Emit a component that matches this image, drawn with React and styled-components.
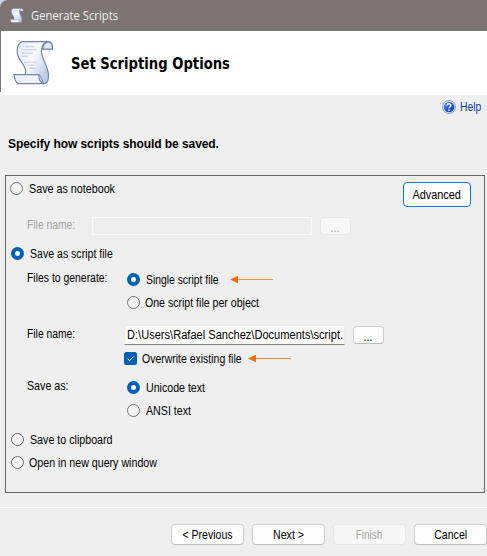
import React from 'react';
import styled, { createGlobalStyle, css } from 'styled-components';

const GlobalStyle = createGlobalStyle`
  * { box-sizing: border-box; }
  body { margin: 0; background: #efefef; }
`;

const Dialog = styled.main`
  display: flex;
  flex-direction: column;
  width: 487px;
  height: 556px;
  overflow: hidden;
  background: #efefef;
  color: #000;
  font: 12px/15px "Liberation Sans", Arial, sans-serif;
  white-space: nowrap;
`;

const TitleCorner = styled.div`
  flex: none;
  background: #c9d3e2;
`;

const TitleBar = styled.header`
  display: flex;
  align-items: center;
  gap: 7px;
  height: 31px;
  padding-left: 10px;
  border-top-left-radius: 8px;
  background: #7b7473;
  color: #f1efef;
  font: 12px/16px "Open Sans", "Noto Sans", sans-serif;
`;

const Banner = styled.section`
  display: flex;
  flex: none;
  align-items: center;
  gap: 16px;
  height: 64px;
  padding-left: 13px;
  background:
    linear-gradient(#7b7473, #7b7473) 0 0 / 1px 61px no-repeat,
    #fff;
`;

const Title = styled.h1`
  margin: 2px 0 0;
  font: bold 15px/20px "DejaVu Sans Condensed", "DejaVu Sans", sans-serif;
  font-stretch: condensed;
`;

const Label = styled.span`
  display: inline-block;
  transform: scaleX(${(p) => p.$fit ?? 0.89});
  transform-origin: ${(p) => (p.$centered ? 'center' : 'left')} center;
`;

const HelpLink = styled.a`
  display: flex;
  flex: none;
  align-items: center;
  gap: 4px;
  height: 24px;
  padding-left: 442px;
  color: #0b3fa8;
`;

const Heading = styled.h2`
  flex: none;
  height: 56px;
  margin: 0;
  padding: 17px 0 0 8px;
  font-size: 12px;
  line-height: 16px;
  letter-spacing: -0.07px;
`;

const Panel = styled.section`
  display: flex;
  flex: none;
  flex-direction: column;
  width: 480px;
  height: 318px;
  margin-left: 5px;
  padding-top: 1px;
  border: 1px solid #646464;
`;

const Row = styled.div`
  display: flex;
  flex: none;
  align-items: center;
  height: ${(p) => p.$height ?? 23}px;
  margin-top: ${(p) => p.$space ?? 0}px;
  padding-left: ${(p) => p.$indent ?? 0}px;
`;

const Caption = styled.span`
  width: ${(p) => p.$width}px;
  padding-bottom: ${(p) => p.$lift ?? 0}px;
  color: ${(p) => (p.$disabled ? '#a3a3a3' : '#000')};
`;

const Option = styled.label`
  display: flex;
  align-items: center;
  gap: ${(p) => p.$gap ?? 6}px;
  ${Label} { padding-top: 2px; }
`;

const Dot = styled.span`
  flex: none;
  width: 13px;
  height: 13px;
  border-radius: 50%;
  ${(p) =>
    p.$checked
      ? css`border: 4px solid #005fb8; background: #fff;`
      : css`border: 1px solid #717171; background: #f3f3f3;`}
`;

const Check = styled.svg`
  flex: none;
  width: 13px;
  height: 13px;
  border-radius: 2.5px;
  background: #005fb8;
`;

const Field = styled.div`
  flex: none;
  overflow: hidden;
  height: ${(p) => (p.$disabled ? 18 : 20)}px;
  width: ${(p) => p.$width}px;
  padding: 2px 0 0 2px;
  ${(p) =>
    p.$disabled
      ? css`border: 1px solid #fafafa; background: #efefef;`
      : css`border: 1px solid #ececec; border-bottom-color: #858585; background: #fff;`}
`;

const Button = styled.button`
  flex: none;
  width: ${(p) => p.$width ?? 73}px;
  height: ${(p) => p.$height ?? 21}px;
  padding: 0;
  border: 1px solid #d0d0d0;
  border-bottom-color: #bdbdbd;
  border-radius: 4px;
  background: #fdfdfd;
  color: #000;
  font: inherit;
  line-height: 16px;
  &:disabled {
    border-color: #e7e7e7;
    background: #f7f7f7;
    color: #a3a3a3;
  }
`;

const AdvancedButton = styled(Button)`
  border-color: #0078d4;
  margin: 5px 0 0 auto;
`;

const BrowseButton = styled(Button)`
  margin-left: 8px;
  padding-top: 3px;
  line-height: 15px;
`;

const TopRow = styled.div`
  display: flex;
  flex: none;
  align-items: flex-start;
  height: 36px;
  padding: 0 13px 0 4px;
  ${Option} { margin-top: 3px; }
`;

const ArrowSvg = styled.svg`
  flex: none;
  width: 44px;
  height: 9px;
  margin-left: ${(p) => p.$gap}px;
`;

const Footer = styled.footer`
  display: flex;
  flex: none;
  gap: 8px;
  height: 49px;
  margin-top: 14px;
  padding: 16px 0 0 171px;
  border-top: 1px solid #fff;
`;

function Scroll({ size }) {
  return (
    <svg width={size} height={size * 1.08} viewBox="0 0 42 45">
      <defs>
        <linearGradient id="paper" x1="0" y1="0" x2="1" y2="0.6">
          <stop offset="0" stopColor="#dfe8fb" />
          <stop offset="0.55" stopColor="#f8faff" />
          <stop offset="1" stopColor="#c3cde6" />
        </linearGradient>
      </defs>
      <path d="M9 1.5H35C29 3 27.500 9 29 15C31 22 36 28 35.500 37C35 41 33.500 43.500 31 43.500L12 35.500C14 31 12 27 8 21C2.500 14 3 4 9 1.500Z" fill="url(#paper)" stroke="#7387b5" strokeWidth="1.200" />
      <path d="M35 1.500C31 2.500 29.500 5 29.500 9H39.500C40 4 38.500 1.500 35 1.500Z" fill="#c1cce5" stroke="#6c80af" strokeWidth="1.200" />
      <path d="M32 8C32 5 33 3 35 2.500C37 3 38 5 38.300 8Z" fill="#e6ecf9" />
      <path d="M1 34.500H26C25.500 39 27.500 42.500 31 43.500H5C3 42 1.500 39 1 34.500Z" fill="#edf2fd" stroke="#7387b5" strokeWidth="1.200" />
      <path d="M26 34.500C27.500 35 28 38 31 43.500" fill="none" stroke="#7387b5" />
      <path d="M12 6.500H21M10 9.500H24M9 13H20M9 16H15M11 22H24M13 25H21M16 28H22" stroke="#c0cbe0" strokeWidth="1" />
    </svg>
  );
}

function HelpIcon() {
  return (
    <svg width="14" height="14" viewBox="0 0 14 14">
      <defs>
        <linearGradient id="orb" x1="0" y1="0" x2="1" y2="1">
          <stop offset="0" stopColor="#7ea8f5" />
          <stop offset="0.5" stopColor="#2159d0" />
          <stop offset="1" stopColor="#133c9d" />
        </linearGradient>
      </defs>
      <circle cx="7" cy="7" r="6.500" fill="#e9effa" stroke="#7d93c4" strokeWidth="0.900" />
      <circle cx="7" cy="7" r="5.300" fill="url(#orb)" />
      <path d="M5.100 5.600C5.100 3.200 9 3.200 9 5.500C9 6.900 7.100 6.900 7.100 8.300" fill="none" stroke="#fff" strokeWidth="1.400" />
      <circle cx="7.100" cy="10.200" r="0.850" fill="#fff" />
    </svg>
  );
}

function Arrow({ gap }) {
  return (
    <ArrowSvg $gap={gap} viewBox="0 0 44 9">
      <path d="M7 4.500H43" stroke="#ff9047" strokeWidth="1" />
      <path d="M0 4.500L8 0.800V8.200Z" fill="#ff6a00" />
    </ArrowSvg>
  );
}

function Radio({ checked, gap, fit, children }) {
  return (
    <Option $gap={gap}>
      <Dot $checked={checked} />
      <Label $fit={fit}>{children}</Label>
    </Option>
  );
}

export default function App() {
  return (
    <>
      <GlobalStyle />
      <Dialog>
        <TitleCorner>
          <TitleBar>
            <Scroll size={14} />
            <Label $fit={0.937}>Generate Scripts</Label>
          </TitleBar>
        </TitleCorner>
        <Banner>
          <Scroll size={42} />
          <Title><Label $fit={0.976}>Set Scripting Options</Label></Title>
        </Banner>
        <HelpLink>
          <HelpIcon />
          <Label $fit={0.86}>Help</Label>
        </HelpLink>
        <Heading>Specify how scripts should be saved.</Heading>
        <Panel>
          <TopRow>
            <Radio fit={0.895}>Save as notebook</Radio>
            <AdvancedButton $width={68} $height={25}>
              <Label $centered $fit={0.908}>Advanced</Label>
            </AdvancedButton>
          </TopRow>
          <Row $height={26} $indent={21}>
            <Caption $width={65} $lift={1} $disabled><Label $fit={0.86}>File name:</Label></Caption>
            <Field $width={220} $disabled />
            <BrowseButton $width={31} $height={18} disabled><Label $centered>...</Label></BrowseButton>
          </Row>
          <Row $height={25} $space={2} $indent={5}>
            <Radio checked fit={0.88}>Save as script file</Radio>
          </Row>
          <Row $height={25} $space={1} $indent={21}>
            <Caption $width={100} $lift={2}><Label $fit={0.868}>Files to generate:</Label></Caption>
            <Radio checked fit={0.863}>Single script file</Radio>
            <Arrow gap={0} />
          </Row>
          <Row $height={21} $indent={121}>
            <Radio gap={5} fit={0.881}>One script file per object</Radio>
          </Row>
          <Row $height={26} $space={9} $indent={21}>
            <Caption $width={97} $lift={2}><Label $fit={0.86}>File name:</Label></Caption>
            <Field $width={221}>
              <Label $fit={0.923}>D:\Users\Rafael Sanchez\Documents\script.</Label>
            </Field>
            <BrowseButton $width={31} $height={18}><Label $centered>...</Label></BrowseButton>
          </Row>
          <Row $height={21} $indent={118}>
            <Option $gap={5}>
              <Check viewBox="0 0 13 13">
                <path d="M3.500 6.700L5.600 8.700L9.700 4.500" fill="none" stroke="#fff" strokeWidth="1" />
              </Check>
              <Label $fit={0.873}>Overwrite existing file</Label>
            </Option>
            <Arrow gap={-8} />
          </Row>
          <Row $space={7} $indent={21}>
            <Caption $width={100} $lift={2}><Label $fit={0.889}>Save as:</Label></Caption>
            <Radio checked fit={0.885}>Unicode text</Radio>
          </Row>
          <Row $indent={121}>
            <Radio fit={0.888}>ANSI text</Radio>
          </Row>
          <Row $space={6} $indent={5}>
            <Radio fit={0.89}>Save to clipboard</Radio>
          </Row>
          <Row $indent={5}>
            <Radio gap={5} fit={0.888}>Open in new query window</Radio>
          </Row>
        </Panel>
        <Footer>
          <Button><Label $centered $fit={0.877}>&lt; Previous</Label></Button>
          <Button><Label $centered $fit={0.886}>Next &gt;</Label></Button>
          <Button disabled><Label $centered $fit={0.83}>Finish</Label></Button>
          <Button><Label $centered $fit={0.882}>Cancel</Label></Button>
        </Footer>
      </Dialog>
    </>
  );
}
